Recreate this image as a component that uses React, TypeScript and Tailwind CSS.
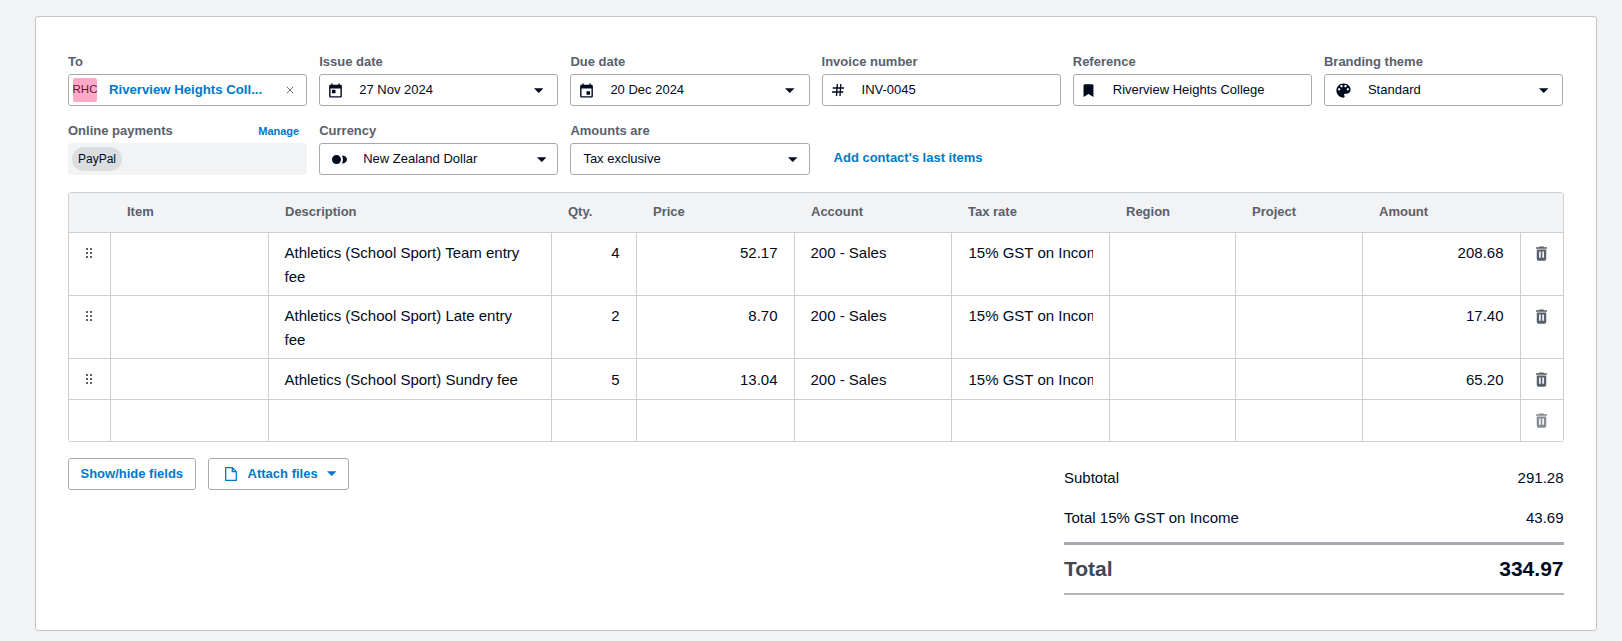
import { ReactNode } from "react";

const icons = {
  issue: "M19 4h-1V2h-2v2H8V2H6v2H5c-1.1 0-2 .9-2 2v14c0 1.1.9 2 2 2h14c1.1 0 2-.9 2-2V6c0-1.1-.9-2-2-2zm0 16H5V9h14v11zM7 11h5v5H7z",
  due: "M19 4h-1V2h-2v2H8V2H6v2H5c-1.1 0-2 .9-2 2v14c0 1.1.9 2 2 2h14c1.1 0 2-.9 2-2V6c0-1.1-.9-2-2-2zm0 16H5V9h14v11zM12 13h5v5h-5z",
  hash: "M10 3 8.800 21h2L12 3h-2zm5.200 0L14 21h2l1.200-18h-2zM4 8v2h17V8H4zm-1 6v2h17v-2H3z",
  bookmark: "M17 3H7c-1.100 0-2 .9-2 2v16l7-4 7 4V5c0-1.100-.9-2-2-2z",
  palette:
    "M12 3c-4.970 0-9 4.030-9 9s4.030 9 9 9c.83 0 1.500-.67 1.500-1.500 0-.39-.15-.74-.39-1.010-.23-.26-.38-.61-.38-.99 0-.83.67-1.500 1.500-1.500H16c2.760 0 5-2.240 5-5 0-4.420-4.030-8-9-8zm-5.500 9c-.83 0-1.500-.67-1.500-1.500S5.670 9 6.500 9 8 9.670 8 10.500 7.330 12 6.500 12zm3-4C8.670 8 8 7.330 8 6.500S8.670 5 9.500 5s1.500.67 1.500 1.500S10.330 8 9.500 8zm5 0c-.83 0-1.500-.67-1.500-1.500S13.670 5 14.500 5s1.500.67 1.500 1.500S15.330 8 14.500 8zm3 4c-.83 0-1.500-.67-1.500-1.500S16.670 9 17.500 9s1.500.67 1.500 1.500-.67 1.500-1.500 1.500z",
  trash:
    "M19 4h-3.500l-1-1h-5l-1 1H5v2h14V4zM6 19c0 1.100.9 2 2 2h8c1.100 0 2-.9 2-2V7H6v12zm3-9.500h2v8H9v-8zm4 0h2v8h-2v-8z",
};

function Icon({ d, className, solid }: { d: string; className: string; solid?: boolean }) {
  return (
    <svg viewBox="0 0 24 24" className={className}>
      <path d={d} fillRule={solid ? "nonzero" : "evenodd"} />
    </svg>
  );
}

function Caret({ blue }: { blue?: boolean }) {
  return (
    <svg viewBox="0 0 10 5" className={`h-[5px] w-[9.500px] ${blue ? "fill-[#0078c8]" : "fill-[#000a1e]"}`}>
      <path d="M0 0h10L5.600 4.700a.8.8 0 0 1-1.200 0z" />
    </svg>
  );
}

function Field({ label, children, extra }: { label: string; children: ReactNode; extra?: ReactNode }) {
  return (
    <div className="w-[239.200px]">
      <div className="flex h-[20px] items-center justify-between text-[13px] font-bold text-[#59606c]">
        <span>{label}</span>
        {extra}
      </div>
      <div className="mt-[2px]">{children}</div>
    </div>
  );
}

function Box({ icon, text, caret, wide, low, pad }: {
  icon?: ReactNode;
  text: string;
  caret?: boolean;
  wide?: boolean;
  low?: boolean;
  pad?: boolean;
}) {
  return (
    <div className={`flex h-[32px] items-center rounded-[3px] border border-[#a6a9b0] bg-white text-[13px] text-[#000a1e] ${low ? "pr-[11px]" : "pr-[14px]"}`}>
      {icon ? (
        <span className={`flex shrink-0 justify-center ${wide ? "mr-[5px] w-[38px]" : "mr-[9px] w-[30px]"}`}>{icon}</span>
      ) : (
        <span className={pad ? "w-[12px] shrink-0" : "w-0"} />
      )}
      <span className="flex-1">{text}</span>
      {caret && <Caret />}
    </div>
  );
}

const rows = [
  { desc: "Athletics (School Sport) Team entry fee", qty: "4", price: "52.17", amount: "208.68", h: "h-[63px]", pt: "pt-[8px]" },
  { desc: "Athletics (School Sport) Late entry fee", qty: "2", price: "8.70", amount: "17.40", h: "h-[63px]", pt: "pt-[8px]" },
  { desc: "Athletics (School Sport) Sundry fee", qty: "5", price: "13.04", amount: "65.20", h: "h-[41px]", pt: "pt-[9px]" },
];

const headers = [
  { label: "Item", w: "w-[158px]" },
  { label: "Description", w: "w-[283px]" },
  { label: "Qty.", w: "w-[85px]" },
  { label: "Price", w: "w-[158px]" },
  { label: "Account", w: "w-[157px]" },
  { label: "Tax rate", w: "w-[158px]" },
  { label: "Region", w: "w-[126px]" },
  { label: "Project", w: "w-[127px]" },
  { label: "Amount", w: "w-[158px]" },
];

const cell = "border-l border-[#cdcfd3] align-top";

function Row({ h, pt, desc, qty, price, account, tax, amount, faded }: {
  h: string;
  pt?: string;
  desc?: string;
  qty?: string;
  price?: string;
  account?: string;
  tax?: string;
  amount?: string;
  faded?: boolean;
}) {
  return (
    <tr className={`${h} border-t border-[#cdcfd3]`}>
      <td className="align-top">
        {!faded && (
          <div className="ml-[17px] mt-[15px] grid w-fit grid-cols-2 gap-[2px]">
            {[0, 1, 2, 3, 4, 5].map((i) => (
              <span key={i} className="size-[2px] bg-[#59606c]" />
            ))}
          </div>
        )}
      </td>
      <td className={cell} />
      <td className={`${cell} ${pt} px-[16px] leading-[24px]`}>{desc}</td>
      <td className={`${cell} ${pt} px-[16px] text-right leading-[24px]`}>{qty}</td>
      <td className={`${cell} ${pt} px-[16px] text-right leading-[24px]`}>{price}</td>
      <td className={`${cell} ${pt} px-[16px] leading-[24px]`}>{account}</td>
      <td className={`${cell} ${pt} pl-[17px] leading-[24px]`}>
        <div className="w-[124px] overflow-hidden whitespace-nowrap">{tax}</div>
      </td>
      <td className={cell} />
      <td className={cell} />
      <td className={`${cell} ${pt} px-[16px] text-right leading-[24px]`}>{amount}</td>
      <td className={cell}>
        <div className="flex justify-center pr-[1px] pt-[11px]">
          <Icon d={icons.trash} className={`size-[19px] ${faded ? "fill-[#868b95]" : "fill-[#59606c]"}`} />
        </div>
      </td>
    </tr>
  );
}

export default function App() {
  return (
    <div className="h-[641px] overflow-hidden bg-[#f2f3f4] pl-[35px] pr-[25px] pt-[16px] font-['Liberation_Sans',Arial,sans-serif] text-[#000a1e]">
      <div className="h-[615px] rounded-[3px] border border-[#c4c6cb] bg-white pl-[32px] pr-[32.500px] pt-[35px]">
        <div className="flex gap-[12px]">
          <Field label="To">
            <div className="flex h-[32px] items-center rounded-[3px] border border-[#a6a9b0] pl-[4px] pr-[12px]">
              <span className="flex size-[24px] items-center justify-center rounded-[2px] bg-[#ffa8c8] text-[11.500px] text-[#5e1a3a]">RHC</span>
              <span className="ml-[12px] flex-1 text-[13.200px] font-bold text-[#0078c8]">Riverview Heights Coll...</span>
              <svg viewBox="0 0 10 10" className="size-[8px] stroke-[#6b6f78] stroke-[1.200]">
                <path d="M1 1l8 8M9 1l-8 8" />
              </svg>
            </div>
          </Field>
          <Field label="Issue date">
            <Box icon={<Icon d={icons.issue} className="size-[17px] fill-[#000a1e]" />} text="27 Nov 2024" caret />
          </Field>
          <Field label="Due date">
            <Box icon={<Icon d={icons.due} className="size-[17px] fill-[#000a1e]" />} text="20 Dec 2024" caret />
          </Field>
          <Field label="Invoice number">
            <Box icon={<Icon solid d={icons.hash} className="size-[16px] fill-[#000a1e]" />} text="INV-0045" />
          </Field>
          <Field label="Reference">
            <Box icon={<Icon d={icons.bookmark} className="size-[17px] fill-[#000a1e]" />} text="Riverview Heights College" />
          </Field>
          <Field label="Branding theme">
            <Box wide icon={<Icon d={icons.palette} className="size-[19px] fill-[#000a1e]" />} text="Standard" caret />
          </Field>
        </div>

        <div className="mt-[15px] flex gap-[12px]">
          <Field
            label="Online payments"
            extra={<span className="pr-[8px] text-[11px] text-[#0078c8]">Manage</span>}
          >
            <div className="flex h-[32px] items-center rounded-[3px] bg-[#f2f3f4] pl-[4px]">
              <span className="flex h-[24px] items-center rounded-full bg-[#dcdddf] px-[6px] text-[12px]">PayPal</span>
            </div>
          </Field>
          <Field label="Currency">
            <Box
              wide
              low
              icon={
                <svg viewBox="0 0 15 9" className="h-[9px] w-[15px] fill-[#000a1e]">
                  <path d="M4.500 0a4.500 4.500 0 1 0 0 9 4.500 4.500 0 0 0 0-9zM10 .4C13 .4 15 2.300 15 4.500S13 8.600 10 8.600C11.200 6.100 11.200 2.900 10 .4z" />
                </svg>
              }
              text="New Zealand Dollar"
              caret
            />
          </Field>
          <Field label="Amounts are"><Box low pad text="Tax exclusive" caret /></Field>
          <div className="flex items-end pb-[7px] pl-[12px] text-[13px] font-bold text-[#0078c8]">
            <span className="mb-[1px]">Add contact's last items</span>
          </div>
        </div>

        <div className="mt-[16.500px] overflow-hidden rounded-[3px] border border-[#cdcfd3]">
          <table className="w-full table-fixed border-collapse text-[15px]">
            <thead>
              <tr className="h-[40px] bg-[#f2f3f4] text-left text-[13px] font-bold text-[#59606c]">
                <th className="w-[41px]" />
                {headers.map((x) => (
                  <th key={x.label} className={`${x.w} pb-[1px] pl-[17px]`}>{x.label}</th>
                ))}
                <th className="w-[42.500px]" />
              </tr>
            </thead>
            <tbody>
              {rows.map((r) => (
                <Row key={r.desc} h={r.h} pt={r.pt} desc={r.desc} qty={r.qty} price={r.price} account="200 - Sales" tax="15% GST on Income" amount={r.amount} />
              ))}
              <Row h="h-[41px]" faded />
            </tbody>
          </table>
        </div>

        <div className="mt-[16px] flex justify-between">
          <div className="flex gap-[12px]">
            <button className="h-[32px] rounded-[3px] border border-[#a6a9b0] px-[11.500px] text-[13px] font-bold text-[#0078c8]">Show/hide fields</button>
            <button className="flex h-[32px] items-center rounded-[3px] border border-[#a6a9b0] pl-[16px] pr-[12px] text-[13px] font-bold text-[#0078c8]">
              <svg viewBox="0 0 12 14" className="h-[14px] w-[12px] fill-none stroke-[#0078c8] stroke-[1.300]">
                <path d="M.7.7h6.600l4 4v8.600H.7zM7.300.7v4h4" />
              </svg>
              <span className="ml-[11px]">Attach files</span>
              <span className="ml-[9px]"><Caret blue /></span>
            </button>
          </div>
          <div className="mt-[1px] w-[499.500px] text-[15px]">
            <div className="flex h-[40px] items-center justify-between"><span>Subtotal</span><span>291.28</span></div>
            <div className="flex h-[40px] items-center justify-between"><span>Total 15% GST on Income</span><span>43.69</span></div>
            <div className="mt-[3px] flex h-[51px] items-center justify-between border-t-[3px] border-[#a6a9b0] text-[21px] font-bold">
              <span className="text-[#404756]">Total</span>
              <span>334.97</span>
            </div>
            <div className="h-[2px] bg-[#b4b6bc]" />
          </div>
        </div>
      </div>
    </div>
  );
}
